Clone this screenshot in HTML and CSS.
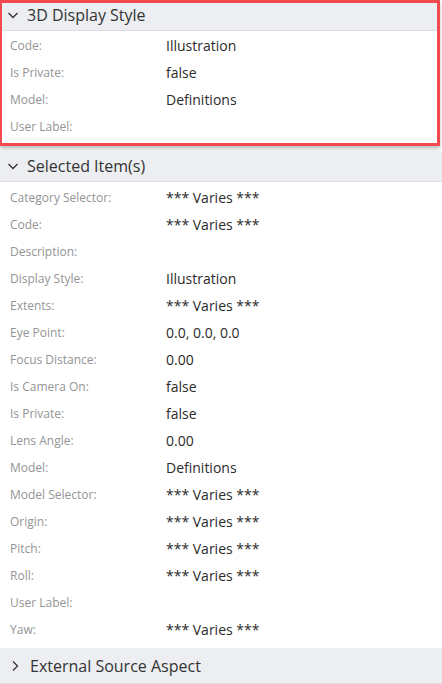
FILE: index.html
```html
<!DOCTYPE html>
<html>
<head>
<meta charset="utf-8">
<link rel="stylesheet" href="styles.css">
</head>
<body>
<div class="panel">
  <section class="group card">
    <div class="head">
      <svg class="chev" viewBox="0 0 12 12" width="12" height="12"><path d="M1.5 4 L6 8.5 L10.5 4" fill="none" stroke="#333" stroke-width="1.3"/></svg>
      <span>3D Display Style</span>
    </div>
    <div class="rows">
      <div class="row"><span class="lbl">Code:</span><span class="val">Illustration</span></div>
      <div class="row"><span class="lbl">Is Private:</span><span class="val">false</span></div>
      <div class="row"><span class="lbl">Model:</span><span class="val">Definitions</span></div>
      <div class="row"><span class="lbl">User Label:</span><span class="val"></span></div>
    </div>
  </section>
  <section class="group">
    <div class="head">
      <svg class="chev" viewBox="0 0 12 12" width="12" height="12"><path d="M1.5 4 L6 8.5 L10.5 4" fill="none" stroke="#333" stroke-width="1.3"/></svg>
      <span>Selected Item(s)</span>
    </div>
    <div class="rows">
      <div class="row"><span class="lbl">Category Selector:</span><span class="val">*** Varies ***</span></div>
      <div class="row"><span class="lbl">Code:</span><span class="val">*** Varies ***</span></div>
      <div class="row"><span class="lbl">Description:</span><span class="val"></span></div>
      <div class="row"><span class="lbl">Display Style:</span><span class="val">Illustration</span></div>
      <div class="row"><span class="lbl">Extents:</span><span class="val">*** Varies ***</span></div>
      <div class="row"><span class="lbl">Eye Point:</span><span class="val">0.0, 0.0, 0.0</span></div>
      <div class="row"><span class="lbl">Focus Distance:</span><span class="val">0.00</span></div>
      <div class="row"><span class="lbl">Is Camera On:</span><span class="val">false</span></div>
      <div class="row"><span class="lbl">Is Private:</span><span class="val">false</span></div>
      <div class="row"><span class="lbl">Lens Angle:</span><span class="val">0.00</span></div>
      <div class="row"><span class="lbl">Model:</span><span class="val">Definitions</span></div>
      <div class="row"><span class="lbl">Model Selector:</span><span class="val">*** Varies ***</span></div>
      <div class="row"><span class="lbl">Origin:</span><span class="val">*** Varies ***</span></div>
      <div class="row"><span class="lbl">Pitch:</span><span class="val">*** Varies ***</span></div>
      <div class="row"><span class="lbl">Roll:</span><span class="val">*** Varies ***</span></div>
      <div class="row"><span class="lbl">User Label:</span><span class="val"></span></div>
      <div class="row"><span class="lbl">Yaw:</span><span class="val">*** Varies ***</span></div>
    </div>
  </section>
  <section class="group">
    <div class="head closed">
      <svg class="chev" viewBox="0 0 12 12" width="12" height="12"><path d="M4 1.5 L8.5 6 L4 10.5" fill="none" stroke="#333" stroke-width="1.3"/></svg>
      <span>External Source Aspect</span>
    </div>
  </section>
</div>
</body>
</html>
```
FILE: styles.css
```css
html, body { margin: 0; padding: 0; }
body {
  width: 442px;
  height: 684px;
  overflow: hidden;
  background: #ffffff;
  font-family: "Open Sans", "Liberation Sans", sans-serif;
  color: #2b2b2b;
}
.panel { display: flex; flex-direction: column; }
.group { display: flex; flex-direction: column; background: #fff; }
.card {
  width: 440px;
  box-sizing: border-box;
  border: 3px solid #f24a4f;
  border-left-width: 2px;
  box-shadow: 0 3px 4px rgba(0,0,0,0.25);
  margin-bottom: 5px;
}
.head {
  display: flex;
  align-items: center;
  gap: 8px;
  height: 31px;
  padding-left: 7px;
  background: #eceef1;
  border-bottom: 1px solid #dcdee2;
  font-size: 16px;
  color: #333;
  box-sizing: border-box;
}
.card .head { height: 28px; padding-left: 5px; padding-bottom: 3px; }
.head.closed { height: 36px; padding-left: 9px; gap: 9px; margin-top: 5px; }
.chev { flex: none; }
.rows { display: flex; flex-direction: column; padding-top: 2px; }
.card .rows { padding-top: 1px; padding-bottom: 3px; }
.row {
  display: flex;
  align-items: center;
  height: 27px;
}
.lbl {
  width: 156px;
  padding-left: 10px;
  font-size: 12px;
  color: #949494;
}
.card .lbl { padding-left: 8px; }
.val {
  font-size: 14px;
  color: #2b2b2b;
}
```
